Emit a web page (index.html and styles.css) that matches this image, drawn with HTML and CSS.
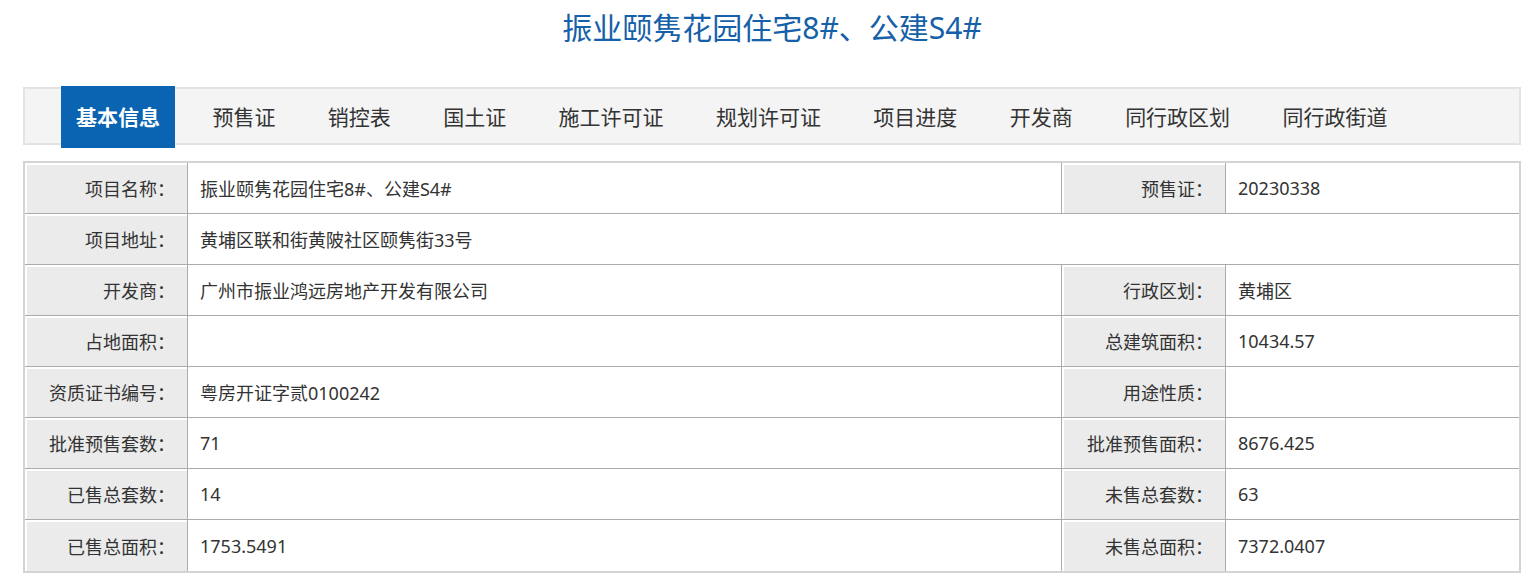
FILE: index.html
```html
<!DOCTYPE html>
<html lang="zh-CN">
<head>
<meta charset="utf-8">
<title>振业颐隽花园住宅8#、公建S4#</title>
<link rel="stylesheet" href="styles.css">
</head>
<body>
<div class="page">
  <h1 class="title">振业颐隽花园住宅8#、公建S4#</h1>
  <div class="tabs">
    <a class="tab active">基本信息</a>
    <a class="tab">预售证</a>
    <a class="tab">销控表</a>
    <a class="tab">国土证</a>
    <a class="tab">施工许可证</a>
    <a class="tab">规划许可证</a>
    <a class="tab">项目进度</a>
    <a class="tab">开发商</a>
    <a class="tab">同行政区划</a>
    <a class="tab">同行政街道</a>
  </div>
  <table class="info">
    <colgroup>
      <col class="c-label1">
      <col class="c-value1">
      <col class="c-label2">
      <col class="c-value2">
    </colgroup>
    <tbody>
      <tr>
        <th>项目名称：</th><td>振业颐隽花园住宅8#、公建S4#</td>
        <th>预售证：</th><td>20230338</td>
      </tr>
      <tr>
        <th>项目地址：</th><td colspan="3">黄埔区联和街黄陂社区颐隽街33号</td>
      </tr>
      <tr>
        <th>开发商：</th><td>广州市振业鸿远房地产开发有限公司</td>
        <th>行政区划：</th><td>黄埔区</td>
      </tr>
      <tr>
        <th>占地面积：</th><td></td>
        <th>总建筑面积：</th><td>10434.57</td>
      </tr>
      <tr>
        <th>资质证书编号：</th><td>粤房开证字贰0100242</td>
        <th>用途性质：</th><td></td>
      </tr>
      <tr>
        <th>批准预售套数：</th><td>71</td>
        <th>批准预售面积：</th><td>8676.425</td>
      </tr>
      <tr>
        <th>已售总套数：</th><td>14</td>
        <th>未售总套数：</th><td>63</td>
      </tr>
      <tr class="last">
        <th>已售总面积：</th><td>1753.5491</td>
        <th>未售总面积：</th><td>7372.0407</td>
      </tr>
    </tbody>
  </table>
</div>
</body>
</html>
```

FILE: styles.css
```css
* { box-sizing: border-box; }
html, body { margin: 0; padding: 0; background: #fff; }
body {
  font-family: "Noto Sans", "Noto Sans CJK SC", sans-serif;
  color: #333;
}
.page {
  width: 1498px;
  margin-left: 23px;
}
.title {
  margin: 0;
  height: 87px;
  padding-top: 6px;
  text-align: center;
  font-size: 30px;
  font-weight: normal;
  line-height: 44px;
  color: #1560a8;
}
.tabs {
  display: flex;
  align-items: flex-start;
  gap: 22.4px;
  height: 58px;
  padding-left: 36px;
  background: #f4f4f4;
  border: 2px solid #e3e3e3;
}
.tab {
  display: block;
  margin-top: -3px;
  height: 62px;
  line-height: 62px;
  padding: 0 15px;
  font-size: 21px;
  color: #333;
  white-space: nowrap;
}
.tab.active {
  background: #0a64b2;
  color: #fff;
  font-weight: bold;
}
.info {
  margin-top: 16px;
  width: 1498px;
  table-layout: fixed;
  border-collapse: separate;
  border-spacing: 0;
  border: 2px solid #d4d4d4;
  font-size: 18px;
}
.c-label1 { width: 163px; }
.c-value1 { width: 874px; }
.c-label2 { width: 164px; }
.c-value2 { width: auto; }
.info th, .info td {
  height: 51px;
  border-right: 1px solid #ababab;
  border-bottom: 1px solid #ababab;
  padding: 0;
  white-space: nowrap;
}
.info th {
  background: #ebebeb;
  font-weight: normal;
  text-align: right;
  padding-right: 12px;
  box-shadow: inset 2px 2px 0 #fff;
}
.info td {
  text-align: left;
  padding-left: 12px;
}
.info tr > :last-child { border-right: none; }
.info tr.last > * { border-bottom: none; }
```
